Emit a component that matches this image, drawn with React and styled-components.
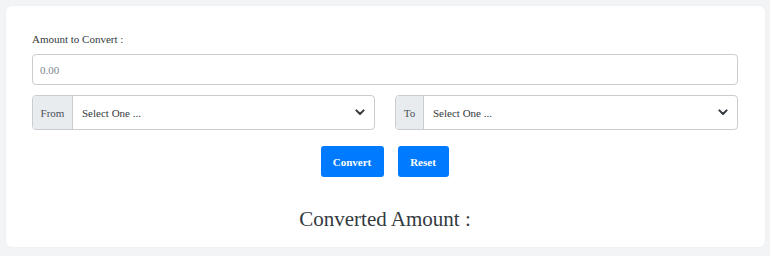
import React from "react";
import styled, { createGlobalStyle } from "styled-components";

const serif = `"Liberation Serif", "Times New Roman", "DejaVu Serif", serif`;

const Global = createGlobalStyle`
  html, body { margin: 0; padding: 0; background: #f3f4f6; }
  body { font-family: ${serif}; color: #212529; }
  * { box-sizing: border-box; }
`;

const Page = styled.div`
  padding: 6px 5px 9px 6px;
  height: 256px;
`;

const Card = styled.div`
  background: #fff;
  border-radius: 6px;
  height: 241px;
  padding: 27px 27px 0 26px;
  display: flex;
  flex-direction: column;
  box-shadow: 0 0 3px rgba(0,0,0,0.04);
`;

const Label = styled.label`
  font-family: ${serif};
  font-size: 11px;
  color: #333a40;
  line-height: 13px;
  margin-bottom: 8px;
`;

const Input = styled.input`
  width: 100%;
  height: 31px;
  border: 1px solid #c9ccd0;
  border-radius: 4px;
  padding: 0 7px;
  font-family: ${serif};
  font-size: 11px;
  color: #495057;
  outline: none;
  &::placeholder { color: #7d868f; font-family: ${serif}; }
`;

const Row = styled.div`
  display: grid;
  grid-template-columns: 1fr 1fr;
  column-gap: 20px;
  margin-top: 10px;
`;

const Group = styled.div`
  display: flex;
  height: 35px;
  border: 1px solid #c9ccd0;
  border-radius: 4px;
  overflow: hidden;
`;

const Prefix = styled.span`
  display: flex;
  align-items: center;
  justify-content: center;
  width: ${p => p.$w}px;
  background: #e9ecef;
  border-right: 1px solid #c9ccd0;
  font-family: ${serif};
  font-size: 11px;
  color: #495057;
`;

const SelectBox = styled.div`
  flex: 1;
  display: flex;
  align-items: center;
  justify-content: space-between;
  padding: 0 9px 0 9px;
  font-family: ${serif};
  font-size: 11px;
  color: #343a40;
`;

const Chevron = () => (
  <svg width="10" height="7" viewBox="0 0 10 7">
    <path d="M1.4 1.4 L5 5 L8.6 1.4" fill="none" stroke="#343a40" strokeWidth="2" strokeLinecap="round" strokeLinejoin="round" />
  </svg>
);

const Actions = styled.div`
  display: flex;
  justify-content: center;
  gap: 14px;
  margin-top: 16px;
  padding-right: 1px;
`;

const Button = styled.button`
  height: 31px;
  width: ${p => p.$w}px;
  border: none;
  border-radius: 3px;
  background: #007bff;
  color: #fff;
  font-family: ${serif};
  font-weight: bold;
  font-size: 11px;
  padding: 0;
`;

const Result = styled.h2`
  margin: 30px 0 0;
  text-align: center;
  font-family: ${serif};
  font-weight: normal;
  font-size: 21px;
  color: #333a40;
  line-height: 24px;
`;

export default function App() {
  return (
    <>
      <Global />
      <Page>
        <Card>
          <Label>Amount to Convert :</Label>
          <Input placeholder="0.00" />
          <Row>
            <Group>
              <Prefix $w={40}>From</Prefix>
              <SelectBox>Select One ...<Chevron /></SelectBox>
            </Group>
            <Group>
              <Prefix $w={28}>To</Prefix>
              <SelectBox>Select One ...<Chevron /></SelectBox>
            </Group>
          </Row>
          <Actions>
            <Button $w={63}>Convert</Button>
            <Button $w={51}>Reset</Button>
          </Actions>
          <Result>Converted Amount :</Result>
        </Card>
      </Page>
    </>
  );
}
